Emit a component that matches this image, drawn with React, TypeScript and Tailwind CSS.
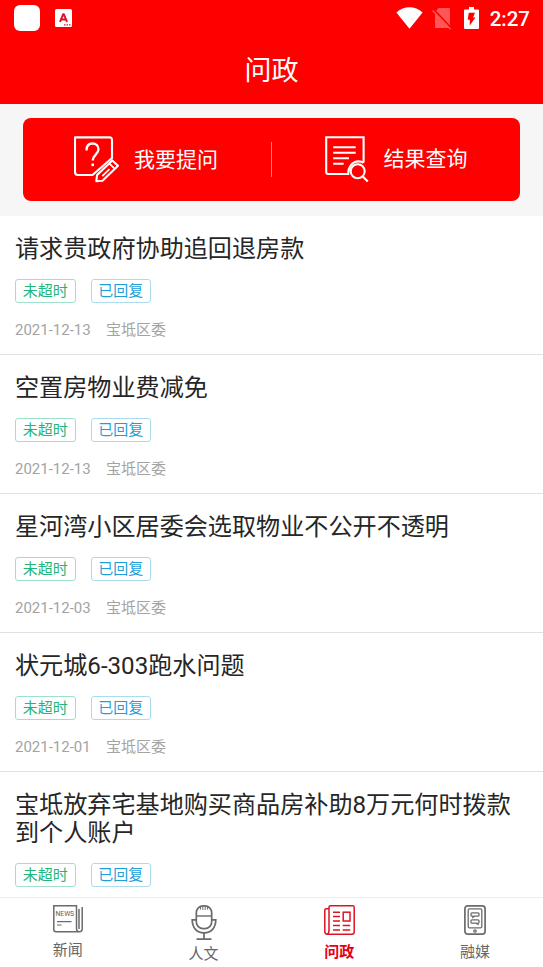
import type { ReactNode } from 'react';
import clsx from 'clsx';

type Question = {
    title: string;
    date?: string;
    dept?: string;
};

const QUESTIONS: Question[] = [
    { title: '请求贵政府协助追回退房款', date: '2021-12-13', dept: '宝坻区委' },
    { title: '空置房物业费减免', date: '2021-12-13', dept: '宝坻区委' },
    { title: '星河湾小区居委会选取物业不公开不透明', date: '2021-12-03', dept: '宝坻区委' },
    { title: '状元城6-303跑水问题', date: '2021-12-01', dept: '宝坻区委' },
    { title: '宝坻放弃宅基地购买商品房补助8万元何时拨款到个人账户' },
];

function StatusBar() {
    return (
        <div className="flex h-[38px] items-start pl-[14px] pr-[13px] pt-[5px] text-white">
            <div className="size-[26px] rounded-[6px] bg-white" />
            <svg className="ml-[15px] mt-[4px]" width="17" height="18" viewBox="0 0 17 18">
                <rect width="17" height="18" rx="1.5" fill="#fff" />
                <path
                    d="M5 12.8 8.2 5.2h.6L12 12.8M6.2 10.6h4.6"
                    fill="none"
                    stroke="#e0102a"
                    strokeWidth="2"
                />
                <path d="M9 15.8h1.5M11.5 15.8H13M14 15.8h1.5" stroke="#e0102a" strokeWidth="1.2" />
            </svg>
            <svg className="ml-auto mt-[2px]" width="27" height="22" viewBox="0 0 27 22">
                <path d="M.4 5.6C8-1.4 19-1.4 26.6 5.6L13.5 21.8Z" fill="#fff" />
            </svg>
            <svg className="ml-[9px] mt-[3px]" width="20" height="22" viewBox="0 0 20 22">
                <path d="M6.5 0H17q1 0 1 1v18q0 1-1 1H4q-1 0-1-1V4Z" fill="#fff" opacity=".34" />
                <path d="M1.6 1.4 19.4 20.4" stroke="#f00" strokeWidth="2" />
                <path d="M.6 2.4 18.6 21.2" stroke="#ff5a5a" strokeWidth="1.4" />
            </svg>
            <svg className="ml-[12px] mt-[2px]" width="15" height="22" viewBox="0 0 15 22">
                <path d="M5 0h5v2.4h4q1 0 1 1V21q0 1-1 1H1q-1 0-1-1V3.4q0-1 1-1h4Z" fill="#fff" />
                <path d="M4.8 5.8H11L9 10.4h2.4L5.8 18.6V12.8H3.7Z" fill="#f00" />
            </svg>
            <span className="ml-[11px] text-[20.5px] font-medium leading-[28px]">2:27</span>
        </div>
    );
}

function AskIcon() {
    return (
        <svg
            width="46"
            height="47"
            viewBox="0 0 46 47"
            fill="none"
            stroke="#fff"
            strokeWidth="2.1"
            strokeLinejoin="round"
        >
            <path d="M38 22V4q0-2.6-2.6-2.6H1V36q0 3 3 3H18.5L38 22Z" />
            <path d="M12.5 14.5c0-4.5 2.5-7 6-7s6 2.4 6 5.8c0 5.2-5.8 5.4-5.8 11.2" strokeWidth="2.3" />
            <path d="M18.7 27.5v2.6" strokeWidth="2.6" />
            <path d="M38.3 24.4 44 29.7 28.5 44.7 22.3 45.2 23.1 39.1Z" fill="#f00" />
            <path d="M35.1 27.3l5.5 5.4M28.3 40.2l7.2-7" strokeWidth="1.8" />
        </svg>
    );
}

function QueryIcon() {
    return (
        <svg width="44" height="47" viewBox="0 0 44 47" fill="none" stroke="#fff" strokeWidth="2.1">
            <path d="M38.6 26.5V1.2H1.2V36q0 2 2 2h20c0-7.5 4.3-12.6 10.5-12.6q2.8 0 4.9 1.4" />
            <path d="M8.2 11.2h22.5M8.2 16.7h22.5M8.2 22.2h15.8M8.2 27.7h10.5" />
            <circle cx="32.7" cy="35.2" r="7" />
            <path d="M37.5 40.2l5.3 5.3" strokeWidth="2.2" />
        </svg>
    );
}

function Tag({ className, children }: { className: string; children: ReactNode }) {
    return (
        <span
            className={clsx(
                'flex h-[24px] w-[60.5px] items-center justify-center rounded-[3px] border text-[15px] leading-[22px]',
                className
            )}
        >
            {children}
        </span>
    );
}

function QuestionItem({ title, date, dept }: Question) {
    return (
        <li className="border-b border-[#e1e1e1] px-[15px] pb-[13px] pt-[19px]">
            <h2 className="text-[24.12px] leading-[28px] text-[#262626]">{title}</h2>
            <div className="mt-[16px] flex gap-[15px]">
                <Tag className="border-[#9fe0cb] text-[#23b57c]">未超时</Tag>
                <Tag className="border-[#a9dcee] text-[#1f9fd8]">已回复</Tag>
            </div>
            {date && (
                <div className="mt-[16px] flex gap-[15px] whitespace-nowrap text-[15px] leading-[22px] text-[#a3a3a3]">
                    <span className="w-[76px]">{date}</span>
                    <span>{dept}</span>
                </div>
            )}
        </li>
    );
}

function NewsIcon() {
    return (
        <svg width="30" height="28" viewBox="0 0 30 28" fill="none" stroke="#6b6b6b">
            <path
                d="M23.5 24V.8H.8V24.5q0 2.2 2.2 2.2H26.5q2.7 0 2.7-2.7V2M23.5 23.5q0 3.2 2.5 3.2M26 4v20"
                strokeWidth="1.5"
            />
            <path d="M4 16.7h14.5M4 20h4.5" strokeWidth="1.2" />
            <text
                x="2.6"
                y="11.4"
                fontSize="7.5"
                textLength="18.5"
                lengthAdjust="spacingAndGlyphs"
                fill="#5c5c5c"
                stroke="none"
            >
                NEWS
            </text>
        </svg>
    );
}

function MicIcon() {
    return (
        <svg width="26" height="35" viewBox="0 0 26 35" fill="none" stroke="#6b6b6b" strokeWidth="1.7">
            <rect x="5.3" y=".9" width="15.4" height="22.7" rx="6.8" />
            <path d="M5.4 11h15.2" strokeWidth="1.4" />
            <path d="M9.5 1.5v3M11.8 1v4M14.2 1v4M16.5 1.5v3" strokeWidth="1" />
            <path d="M5.4 14.8H1.2c0 8 4.6 13.1 11.8 13.1S24.8 22.8 24.8 14.8H20.6" />
            <path d="M13 28v6M5.5 34.1h15" />
        </svg>
    );
}

function PaperIcon() {
    return (
        <svg width="31" height="30" viewBox="0 0 31 30" fill="none" stroke="#dc1424" strokeWidth="1.5">
            <path d="M5 26V2.2Q5 .8 6.4.8H28.6Q30.2.8 30.2 2.4V27Q30.2 29.2 28 29.2H3.5Q.8 29.2.8 26.5V5q0-1.3 1.3-1.3H5M5 25.5q0 3.5-2.5 3.7" />
            <path d="M9 7.2h7M9 11.6h7M9 16h7M9 20.6h7M9 25h7M18.7 20.6h7.5M18.7 25h7.5" />
            <rect x="19.2" y="7.2" width="6.8" height="8.8" />
        </svg>
    );
}

function PhoneIcon() {
    return (
        <svg width="22" height="30" viewBox="0 0 22 30" fill="none" stroke="#6b6b6b" strokeWidth="1.7">
            <rect x=".9" y=".9" width="20.2" height="28.2" rx="2.8" />
            <rect x="4.2" y="3.9" width="13.6" height="18.9" rx="1.2" strokeWidth="1.3" />
            <path
                d="M8 7.8h6q1 0 1 1v1.4q0 1-1 1h-3.2l-2 1.2v-1.2H8q-1 0-1-1V8.800q0-1 1-1ZM8 14.800h6q1 0 1 1v1.400q0 1-1 1v1.200l-2-1.200H8q-1 0-1-1v-1.400q0-1 1-1Z"
                strokeWidth="1.3"
            />
            <circle cx="11" cy="26" r="1.2" strokeWidth="1.3" />
        </svg>
    );
}

const TABS = [
    { label: '新闻', icon: <NewsIcon />, gap: 'gap-[6.5px]' },
    { label: '人文', icon: <MicIcon />, gap: 'gap-[4px]' },
    { label: '问政', icon: <PaperIcon />, gap: 'gap-[7px]', active: true },
    { label: '融媒', icon: <PhoneIcon />, gap: 'gap-[7px]' },
];

export default function App() {
    return (
        <div className="flex h-screen flex-col overflow-hidden bg-white font-['Roboto','Noto_Sans_CJK_SC',sans-serif]">
            <header className="shrink-0 bg-[#ff0000]">
                <StatusBar />
                <h1 className="flex h-[65.5px] items-center justify-center pt-[1px] text-[27px] leading-none text-white">
                    问政
                </h1>
            </header>

            <section className="h-[112.5px] shrink-0 bg-[#f6f6f6] px-[23px] pt-[14.5px]">
                <div className="flex h-[83px] items-center rounded-[8px] bg-[#ff0000] text-[21px] text-white">
                    <button className="flex flex-1 items-center pl-[51px]">
                        <AskIcon />
                        <span className="ml-[14px] pt-[2px]">我要提问</span>
                    </button>
                    <div className="h-[35px] w-px translate-x-px bg-[#ff8080]" />
                    <button className="flex flex-1 items-center pl-[54px]">
                        <QueryIcon />
                        <span className="ml-[15px] pt-[1px]">结果查询</span>
                    </button>
                </div>
            </section>

            <ul className="min-h-0 flex-1 overflow-hidden">
                {QUESTIONS.map((q) => (
                    <QuestionItem key={q.title} {...q} />
                ))}
            </ul>

            <nav className="flex h-[70px] shrink-0 border-t border-[#ececec] bg-white">
                {TABS.map((tab) => (
                    <button
                        key={tab.label}
                        className={clsx(
                            'flex flex-1 flex-col items-center justify-start pt-[7px] text-[15px] leading-[20px]',
                            tab.gap,
                            tab.active ? 'font-bold text-[#e60012]' : 'text-[#666666]'
                        )}
                    >
                        {tab.icon}
                        <span>{tab.label}</span>
                    </button>
                ))}
            </nav>
        </div>
    );
}
